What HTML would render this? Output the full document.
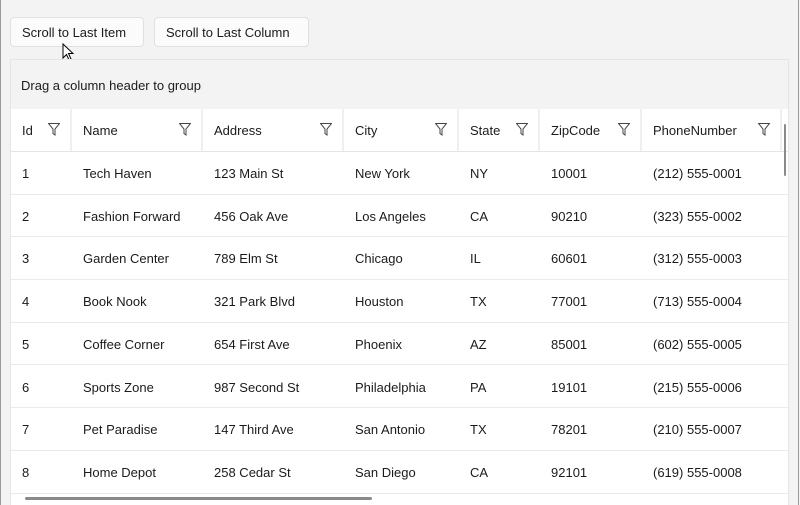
<!DOCTYPE html>
<html><head><style>
body{margin:0;width:800px;height:505px;background:#f3f3f3;font-family:"Liberation Sans",sans-serif;font-size:13px;color:#1b1b1b;position:relative;overflow:hidden}
.edge{position:absolute;top:0;bottom:0;width:1px;background:#9a9a9a}
.btn{position:absolute;top:17px;height:30px;background:#fbfbfb;border:1px solid #e0e0e0;border-radius:4px;box-sizing:border-box;line-height:30px;padding:0 11px;font-size:13px}
.grid{position:absolute;left:10px;top:59px;width:779px;height:446px;border:1px solid #e5e5e5;border-bottom:none;box-sizing:border-box;background:#fff;overflow:hidden}
.gp{height:49px;background:#f3f3f3;line-height:52px;padding-left:10px;font-size:13px}
.hdr{position:absolute;top:49px;left:0;height:43px;width:779px;border-bottom:1px solid #e5e5e5;box-sizing:border-box}
.c{position:absolute;padding-left:11px;box-sizing:border-box;white-space:nowrap}
.hc{height:42px;line-height:44px;border-right:2px solid #efefef}
.f{position:absolute;top:14px;width:12px;height:13px}
.row{position:absolute;left:0;width:779px;height:42.7px;border-bottom:1px solid #ebebeb;box-sizing:border-box;line-height:44px}
</style></head><body>
<div class="edge" style="left:0"></div><div class="edge" style="left:798px"></div>
<div class="btn" style="left:10px;width:134px">Scroll to Last Item</div>
<div class="btn" style="left:154px;width:155px">Scroll to Last Column</div>
<svg style="position:absolute;left:62px;top:43px" width="14" height="20" viewBox="0 0 14 20"><path d="M1 1 L1 15 L4.5 11.5 L7 17 L9 16 L6.5 10.5 L11 10.5 Z" fill="#fff" stroke="#000" stroke-width="1"/></svg>
<div class="grid">
<div class="gp">Drag a column header to group</div>
<div class="hdr">
<div id="h"></div>
</div>
<div id="rows"></div>
<div style="position:absolute;left:773px;top:64px;width:2px;height:52px;background:#8a8a8a;border-radius:1px"></div>
<div style="position:absolute;left:14px;top:437px;width:347px;height:3px;background:#8a8a8a;border-radius:2px"></div>
</div>
<script>
var cols=[[0,61,"Id"],[61,131,"Name"],[192,141,"Address"],[333,115,"City"],[448,81,"State"],[529,102,"ZipCode"],[631,140,"PhoneNumber"]];
var data=[["1","Tech Haven","123 Main St","New York","NY","10001","(212) 555-0001"],
["2","Fashion Forward","456 Oak Ave","Los Angeles","CA","90210","(323) 555-0002"],
["3","Garden Center","789 Elm St","Chicago","IL","60601","(312) 555-0003"],
["4","Book Nook","321 Park Blvd","Houston","TX","77001","(713) 555-0004"],
["5","Coffee Corner","654 First Ave","Phoenix","AZ","85001","(602) 555-0005"],
["6","Sports Zone","987 Second St","Philadelphia","PA","19101","(215) 555-0006"],
["7","Pet Paradise","147 Third Ave","San Antonio","TX","78201","(210) 555-0007"],
["8","Home Depot","258 Cedar St","San Diego","CA","92101","(619) 555-0008"]];
var h="";cols.forEach(function(c){h+='<div class="c hc" style="left:'+c[0]+'px;width:'+c[1]+'px">'+c[2]+'<svg class="f" style="left:'+(c[1]-24)+'px" viewBox="0 0 12 13"><path d="M0.5 0.5 H11.5 L7 6 V12 L5 10.5 V6 Z" fill="none" stroke="#444" stroke-width="1"/></svg></div>';});
document.getElementById("h").innerHTML=h;
var r="";data.forEach(function(d,i){r+='<div class="row" style="top:'+(92+i*42.7)+'px">';cols.forEach(function(c,j){r+='<div class="c" style="left:'+c[0]+'px;width:'+c[1]+'px">'+d[j]+'</div>';});r+='</div>';});
document.getElementById("rows").innerHTML=r;
</script>
</body></html>
